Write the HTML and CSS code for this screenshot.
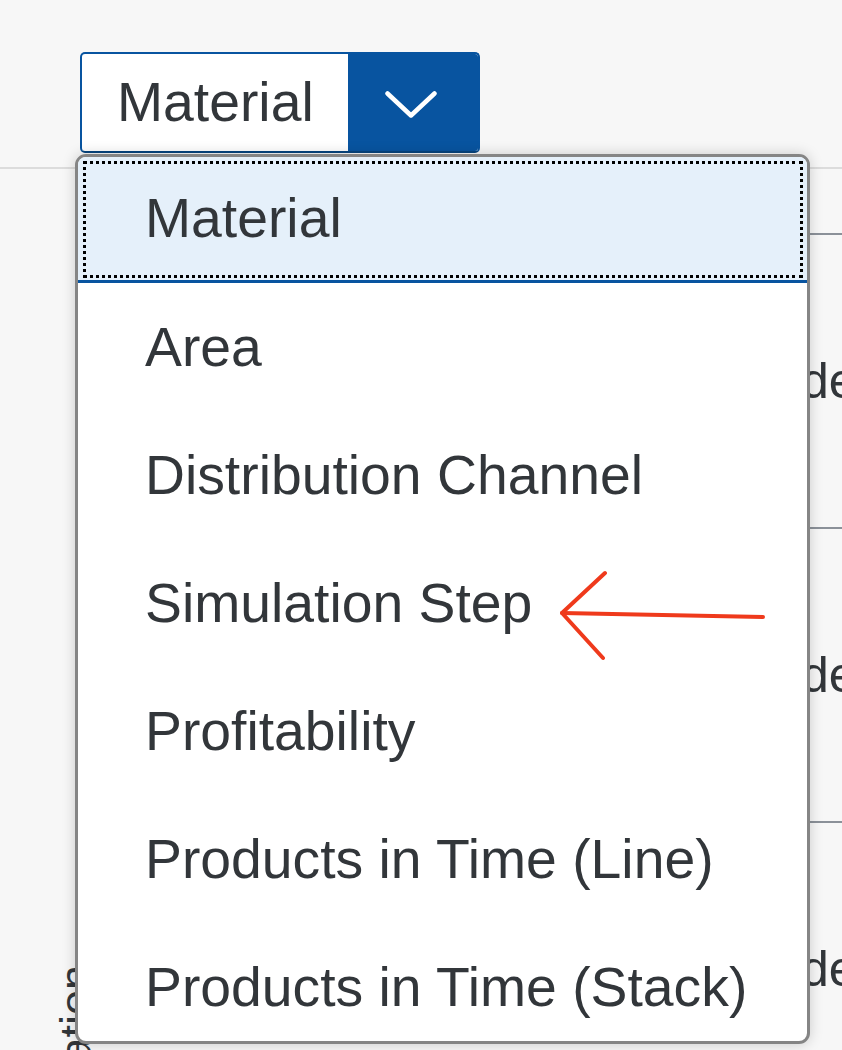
FILE: index.html
```html
<!DOCTYPE html>
<html>
<head>
<meta charset="utf-8">
<link rel="stylesheet" href="styles.css">
</head>
<body>
<div class="page">
  <div class="toolbar">
    <div class="select">
      <span class="select-value">Material</span>
      <span class="select-btn">
        <svg width="52" height="27" viewBox="0 0 52 27"><polyline points="2.5,2.5 26,24.5 49.5,2.5" fill="none" stroke="#fff" stroke-width="4.5" stroke-linecap="round" stroke-linejoin="round"/></svg>
      </span>
    </div>
  </div>
  <div class="divider"></div>
  <div class="table">
    <div class="side"><span class="side-label">Simulation</span></div>
    <div class="rows">
      <div class="row head"></div>
      <div class="row"><span class="cell-text">details</span></div>
      <div class="row"><span class="cell-text">details</span></div>
      <div class="row"><span class="cell-text">details</span></div>
    </div>
  </div>

  <div class="dropdown">
    <ul class="list">
      <li class="item selected">Material</li>
      <li class="item">Area</li>
      <li class="item">Distribution Channel</li>
      <li class="item">Simulation Step</li>
      <li class="item">Profitability</li>
      <li class="item">Products in Time (Line)</li>
      <li class="item">Products in Time (Stack)</li>
    </ul>
  </div>

  <svg class="annotation" width="220" height="100" viewBox="0 0 220 100">
    <g fill="none" stroke="#ef3a1c" stroke-width="4" stroke-linecap="round" stroke-linejoin="round">
      <polyline points="45,3 2,43 43,88"/>
      <line x1="2" y1="43" x2="203" y2="47"/>
    </g>
  </svg>
</div>
</body>
</html>
```

FILE: styles.css
```css
* { box-sizing: border-box; }
html, body {
  margin: 0;
  padding: 0;
  background: #f7f7f7;
  overflow: hidden;
}
body {
  width: 842px;
  height: 1050px;
  font-family: "Liberation Sans", Arial, sans-serif;
  color: #32363a;
}
.page {
  position: relative;
  width: 842px;
  height: 1050px;
  overflow: hidden;
}
.toolbar {
  padding: 52px 0 14px 80px;
}
.select {
  display: flex;
  width: 400px;
  height: 101px;
  border: 2px solid #0854a0;
  border-bottom-color: #06457f;
  border-radius: 5px;
  background: #fff;
  overflow: hidden;
}
.select-value {
  flex: 1;
  display: flex;
  align-items: center;
  padding-left: 35px;
  font-size: 55.3px;
  line-height: 1;
}
.select-btn {
  width: 130px;
  background: #0854a0;
  display: flex;
  align-items: center;
  justify-content: center;
  padding-right: 4px;
  padding-top: 4px;
}
.divider {
  height: 2px;
  background: #dcdcdc;
}
.table {
  display: grid;
  grid-template-columns: 100px 1fr;
}
.side {
  padding: 796px 0 0 53px;
}
.side-label {
  display: inline-block;
  writing-mode: vertical-rl;
  transform: rotate(180deg);
  font-size: 45px;
  line-height: 1;
  white-space: nowrap;
}
.rows {
  display: flex;
  flex-direction: column;
}
.row {
  height: 294px;
  border-top: 2px solid #8b9199;
  display: flex;
  align-items: center;
  padding-left: 701px;
  white-space: nowrap;
  overflow: hidden;
}
.row.head {
  height: 64px;
  border-top: 0;
}
.cell-text {
  font-size: 50px;
  line-height: 1;
}
.dropdown {
  position: absolute;
  left: 75px;
  top: 154px;
  width: 735px;
  height: 890px;
  border: 3px solid #858585;
  border-radius: 11px;
  background: #fff;
  box-shadow: 0 0 14px rgba(0, 0, 0, 0.18);
  overflow: hidden;
  z-index: 2;
}
.list {
  list-style: none;
  margin: 0;
  padding: 0;
}
.item {
  height: 128px;
  line-height: 128px;
  padding-left: 67px;
  font-size: 55.3px;
  white-space: nowrap;
}
.item.selected {
  position: relative;
  height: 126px;
  line-height: 123px;
  background: #e5f0fa;
  border-bottom: 3px solid #0854a0;
}
.item.selected::after {
  content: "";
  position: absolute;
  left: 5px;
  right: 4px;
  top: 4px;
  bottom: 2px;
  border: 3px dotted #000;
}
.annotation {
  position: absolute;
  left: 560px;
  top: 570px;
  z-index: 3;
}
```
